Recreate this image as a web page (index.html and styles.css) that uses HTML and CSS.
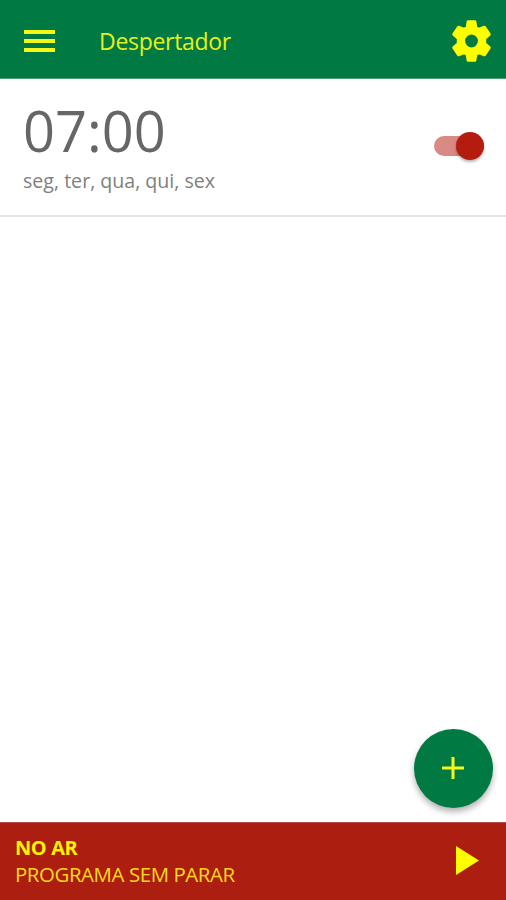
FILE: index.html
```html
<!DOCTYPE html>
<html lang="pt-BR">
<head>
  <meta charset="UTF-8">
  <meta name="viewport" content="width=device-width, initial-scale=1.0">
  <title>Despertador</title>
  <link rel="stylesheet" href="styles.css">
</head>
<body>
  <header class="toolbar">
    <button type="button" class="icon-button menu-button" aria-label="Menu">
      <svg width="31" height="22" viewBox="0 0 31 22">
        <path d="M0 0h31v4H0zM0 9h31v4H0zM0 18h31v4H0z"/>
      </svg>
    </button>
    <h1 class="title">Despertador</h1>
    <button type="button" class="icon-button settings-button" aria-label="Ajustes">
      <svg width="41" height="42" viewBox="-20.5 -21 41 42">
        <path d="M-3.4-19.2H3.4L4.3-13.4 7.4-11.6 12.9-13.8 17.8-6.6 13.2-2.6V2.6L17.8 6.6 12.9 13.8 7.4 11.6 4.3 13.4 3.4 19.2H-3.4L-4.3 13.4-7.4 11.6-12.9 13.8-17.8 6.6-13.2 2.6V-2.6L-17.8-6.6-12.9-13.8-7.4-11.6-4.3-13.4zM0-7.9A7.9 7.9 0 0 0 0 7.9 7.9 7.9 0 0 0 0-7.9z"/>
      </svg>
    </button>
  </header>

  <main class="alarm-list">
    <div class="alarm">
      <div class="alarm-info">
        <div class="alarm-time">07:00</div>
        <div class="alarm-days">seg, ter, qua, qui, sex</div>
      </div>
      <div class="switch"><div class="switch-thumb"></div></div>
    </div>
  </main>

  <button type="button" class="fab" aria-label="Adicionar">
    <svg width="22" height="22" viewBox="0 0 22 22">
      <path d="M9.5 0h3v9.5H22v3h-9.5V22h-3v-9.5H0v-3h9.5z"/>
    </svg>
  </button>

  <footer class="player">
    <div class="player-info">
      <div class="player-status">NO AR</div>
      <div class="player-program">PROGRAMA SEM PARAR</div>
    </div>
    <button type="button" class="icon-button play-button" aria-label="Tocar">
      <svg width="23" height="29" viewBox="0 0 23 29">
        <path d="M0 0l23 14.5L0 29z"/>
      </svg>
    </button>
  </footer>
</body>
</html>
```
FILE: styles.css
```css
* {
  box-sizing: border-box;
}

body {
  font-family: "Open Sans", "Noto Sans", sans-serif;
  margin: 0;
  height: 100vh;
  display: flex;
  flex-direction: column;
  background-color: #fff;
  overflow: hidden;
}

button {
  border: 0;
  padding: 0;
  cursor: pointer;
}

svg {
  display: block;
  fill: #ffff00;
}

.icon-button {
  background: none;
}

.toolbar {
  display: flex;
  align-items: center;
  height: 79px;
  padding: 3px 14px 0 24px;
  background-color: #007a42;
  border-bottom: 1px solid #4f9c7b;
}

.menu-button svg {
  fill: #f4f81a;
}

.settings-button svg {
  fill-rule: evenodd;
  stroke: #ffff00;
  stroke-width: 3;
  stroke-linejoin: round;
}

.title {
  flex: 1;
  margin: 0 0 0 44px;
  font-size: 23px;
  letter-spacing: -0.3px;
  line-height: 32px;
  font-weight: 400;
  color: #e6f01c;
}

.alarm-list {
  flex: 1;
}

.alarm {
  display: flex;
  justify-content: space-between;
  height: 138px;
  padding: 14px 22px 0 23px;
  border-bottom: 2px solid #e6e6e6;
}

.alarm-time {
  font-size: 56px;
  line-height: 74px;
  color: #666;
}

.alarm-days {
  font-size: 19.6px;
  line-height: 27px;
  color: #808080;
}

.switch {
  display: flex;
  align-items: center;
  justify-content: flex-end;
  width: 50px;
  height: 20px;
  margin-top: 43px;
  border-radius: 10px;
  background-color: #d98a84;
}

.switch-thumb {
  flex: none;
  width: 28px;
  height: 28px;
  border-radius: 50%;
  background-color: #b51c10;
  box-shadow: 0 2px 3px rgba(0, 0, 0, 0.3);
}

/* floats over the alarm list */
.fab {
  position: absolute;
  right: 13px;
  bottom: 92px;
  display: flex;
  align-items: center;
  justify-content: center;
  width: 79px;
  height: 79px;
  padding: 0 1px 2px 0;
  border-radius: 50%;
  background-color: #007a42;
  box-shadow: 0 4px 6px rgba(0, 0, 0, 0.3);
}

.fab svg {
  fill: #f4f81a;
}

.player {
  display: flex;
  align-items: center;
  justify-content: space-between;
  height: 78px;
  padding: 0 27px 0 15px;
  background-color: #ab1e10;
  border-top: 1px solid #b5504a;
}

.player-info {
  margin-bottom: 2px;
  line-height: 27px;
  font-size: 20.4px;
  letter-spacing: -0.4px;
  color: #ffd91a;
}

.player-status {
  font-size: 20px;
  font-weight: 700;
  color: #fff200;
}

.play-button {
  margin-bottom: 3px;
}
```
